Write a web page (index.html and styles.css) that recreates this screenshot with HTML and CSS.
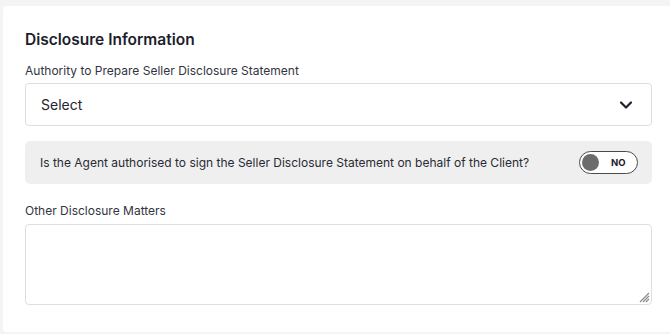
FILE: index.html
```html
<!DOCTYPE html>
<html>
<head>
<meta charset="utf-8">
<link rel="stylesheet" href="styles.css">
</head>
<body>
<div class="card">
  <h2 class="title">Disclosure Information</h2>
  <label class="label">Authority to Prepare Seller Disclosure Statement</label>
  <div class="select">
    <span>Select</span>
    <svg class="chev" width="14" height="10" viewBox="0 0 14 10"><path d="M2 2.5 L7 7.5 L12 2.5" fill="none" stroke="#1f1f2e" stroke-width="2.2" stroke-linecap="round" stroke-linejoin="round"/></svg>
  </div>
  <div class="band">
    <span class="band-text">Is the Agent authorised to sign the Seller Disclosure Statement on behalf of the Client?</span>
    <div class="toggle"><span class="knob"></span><span class="no">NO</span></div>
  </div>
  <label class="label label2">Other Disclosure Matters</label>
  <div class="textarea">
    <svg class="grip" width="12" height="12" viewBox="0 0 12 12"><path d="M11 2 L2 11 M11 5 L5 11 M11 8 L8 11" stroke="#8a8a8a" stroke-width="1.2"/></svg>
  </div>
</div>
</body>
</html>
```
FILE: styles.css
```css
html, body { margin: 0; padding: 0; }
body {
  background: #f4f4f4;
  width: 670px;
  height: 334px;
  overflow: hidden;
  font-family: Inter, "Liberation Sans", sans-serif;
  padding-top: 6px;
  box-sizing: border-box;
}
.card {
  margin-left: 3px;
  width: 671px;
  height: 326px;
  box-sizing: border-box;
  background: #fff;
  border-radius: 4px;
  padding: 24px 0 0 22px;
  display: flex;
  flex-direction: column;
  align-items: flex-start;
}
.title {
  margin: 0;
  font-size: 15.5px;
  font-weight: 600;
  color: #1d1d2b;
  line-height: 20px;
  height: 20px;
}
.label {
  margin-top: 13px;
  font-size: 12px;
  line-height: 16px;
  color: #34343f;
}
.label2 { margin-top: 19px; }
.select {
  margin-top: 4px;
  width: 627px;
  height: 43px;
  box-sizing: border-box;
  border: 1px solid #dedede;
  border-radius: 4px;
  display: flex;
  align-items: center;
  justify-content: space-between;
  padding: 0 18px 0 15px;
  font-size: 14px;
  color: #25252f;
}
.band {
  margin-top: 15px;
  width: 627px;
  height: 43px;
  box-sizing: border-box;
  background: #efefef;
  border-radius: 5px;
  display: flex;
  align-items: center;
  justify-content: space-between;
  padding: 0 14px 0 15px;
  font-size: 12px;
  color: #2a2a35;
}
.toggle {
  width: 59px;
  height: 23px;
  box-sizing: border-box;
  border: 1.6px solid #4a4a4a;
  border-radius: 12px;
  background: #fff;
  display: flex;
  align-items: center;
  padding-left: 2px;
}
.knob {
  width: 17px;
  height: 17px;
  border-radius: 50%;
  background: #6b6b6b;
}
.no {
  margin-left: 12px;
  font-size: 9.5px;
  font-weight: 700;
  color: #1d1d2b;
}
.textarea {
  margin-top: 5px;
  width: 627px;
  height: 81px;
  box-sizing: border-box;
  border: 1px solid #dedede;
  border-radius: 4px;
  display: flex;
  align-items: flex-end;
  justify-content: flex-end;
  padding: 0 1px 1px 0;
}
```
